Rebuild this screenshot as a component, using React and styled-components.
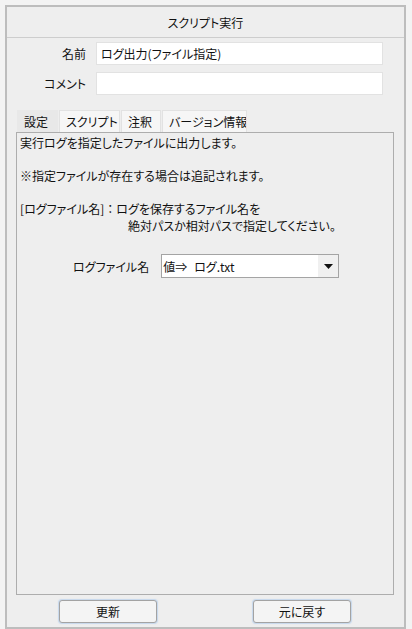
import React from "react";
import styled, { createGlobalStyle } from "styled-components";

const GlobalStyle = createGlobalStyle`
  html, body {
    margin: 0;
    padding: 0;
    background: #f3f3f3;
  }
  body {
    font-family: "Noto Sans CJK JP", "Noto Sans", sans-serif;
    font-size: 12px;
    color: #111;
    font-feature-settings: "palt";
  }
`;

const Panel = styled.div`
  box-sizing: border-box;
  margin: 5px 0 0 5px;
  width: 401px;
  height: 624px;
  border: 2px solid #bdbdbd;
  background: #eeeeee;
  display: flex;
  flex-direction: column;
  padding: 0 10px 4px 9px;
`;

const Header = styled.div`
  margin: 0 -10px 0 -9px;
  height: 30px;
  border-bottom: 1px solid #cdcdcd;
  display: flex;
  align-items: center;
  justify-content: center;
`;

const Form = styled.div`
  display: flex;
  flex-direction: column;
  gap: 7px;
  margin-top: 4px;
  margin-left: -9px;
`;

const Row = styled.div`
  display: flex;
  align-items: center;
  gap: 10px;
`;

const Label = styled.span`
  width: 79px;
  text-align: right;
`;

const TextInput = styled.div`
  box-sizing: border-box;
  width: 287px;
  height: 23px;
  background: #fff;
  border: 1px solid #e2e2e2;
  padding: 0 4px;
  display: flex;
  align-items: center;
`;

const Tabs = styled.div`
  display: flex;
  margin-top: 15px;
  padding-left: 1px;
  height: 22px;
`;

const Tab = styled.div`
  box-sizing: border-box;
  width: ${(p) => p.$w}px;
  margin-right: 1px;
  display: flex;
  align-items: center;
  padding-left: 6px;
  white-space: nowrap;
  overflow: hidden;
  background: ${(p) => (p.$active ? "#e8e8e8" : "#f6f6f6")};
  border: 1px solid ${(p) => (p.$active ? "#e8e8e8" : "#e2e2e2")};
  border-bottom: none;
`;

const Content = styled.div`
  flex: 1;
  border: 1px solid #adadad;
  background: #eeeeee;
  padding: 2px 3px;
  display: flex;
  flex-direction: column;
`;

const Line = styled.div`
  line-height: 16.5px;
  min-height: 16.5px;
  padding-left: ${(p) => p.$indent || 0}px;
`;

const Colon = styled.span`
  font-feature-settings: normal;
`;

const SelectRow = styled.div`
  display: flex;
  align-items: center;
  gap: 12px;
  margin-top: 20px;
  padding-left: 53px;
`;

const Select = styled.div`
  box-sizing: border-box;
  width: 178px;
  height: 24px;
  border: 1px solid #a4a4a4;
  background: #fff;
  display: flex;
  align-items: center;
`;

const SelectPrefix = styled.span`
  width: 31px;
  padding-left: 1px;
`;

const SelectValue = styled.span`
  flex: 1;
`;

const Arrow = styled.div`
  width: 20px;
  align-self: stretch;
  background: #f0f0f0;
  display: flex;
  align-items: center;
  justify-content: center;
`;

const Buttons = styled.div`
  display: flex;
  justify-content: center;
  gap: 96px;
  margin-top: 5px;
`;

const Button = styled.button`
  box-sizing: border-box;
  width: 98px;
  height: 23px;
  font: inherit;
  color: #111;
  background: #f4f4f4;
  border: 1px solid #a3a3a3;
  border-radius: 3px;
  box-shadow: 0 0 1px 1px rgba(170, 200, 235, 0.6);
  padding: 0;
`;

export default function App() {
  return (
    <>
      <GlobalStyle />
      <Panel>
        <Header>スクリプト実行</Header>
        <Form>
          <Row>
            <Label>名前</Label>
            <TextInput>ログ出力(ファイル指定)</TextInput>
          </Row>
          <Row>
            <Label>コメント</Label>
            <TextInput />
          </Row>
        </Form>
        <Tabs>
          <Tab $w={41} $active>設定</Tab>
          <Tab $w={61}>スクリプト</Tab>
          <Tab $w={40}>注釈</Tab>
          <Tab $w={85}>バージョン情報</Tab>
        </Tabs>
        <Content>
          <Line>実行ログを指定したファイルに出力します。</Line>
          <Line />
          <Line>※指定ファイルが存在する場合は追記されます。</Line>
          <Line />
          <Line>
            [ログファイル名]<Colon>：</Colon>ログを保存するファイル名を
          </Line>
          <Line $indent={108}>絶対パスか相対パスで指定してください。</Line>
          <SelectRow>
            <span>ログファイル名</span>
            <Select>
              <SelectPrefix>値⇒</SelectPrefix>
              <SelectValue>ログ.txt</SelectValue>
              <Arrow>
                <svg width="9" height="5" viewBox="0 0 9 5">
                  <path d="M0 0h9L4.5 5z" fill="#111" />
                </svg>
              </Arrow>
            </Select>
          </SelectRow>
        </Content>
        <Buttons>
          <Button>更新</Button>
          <Button>元に戻す</Button>
        </Buttons>
      </Panel>
    </>
  );
}
